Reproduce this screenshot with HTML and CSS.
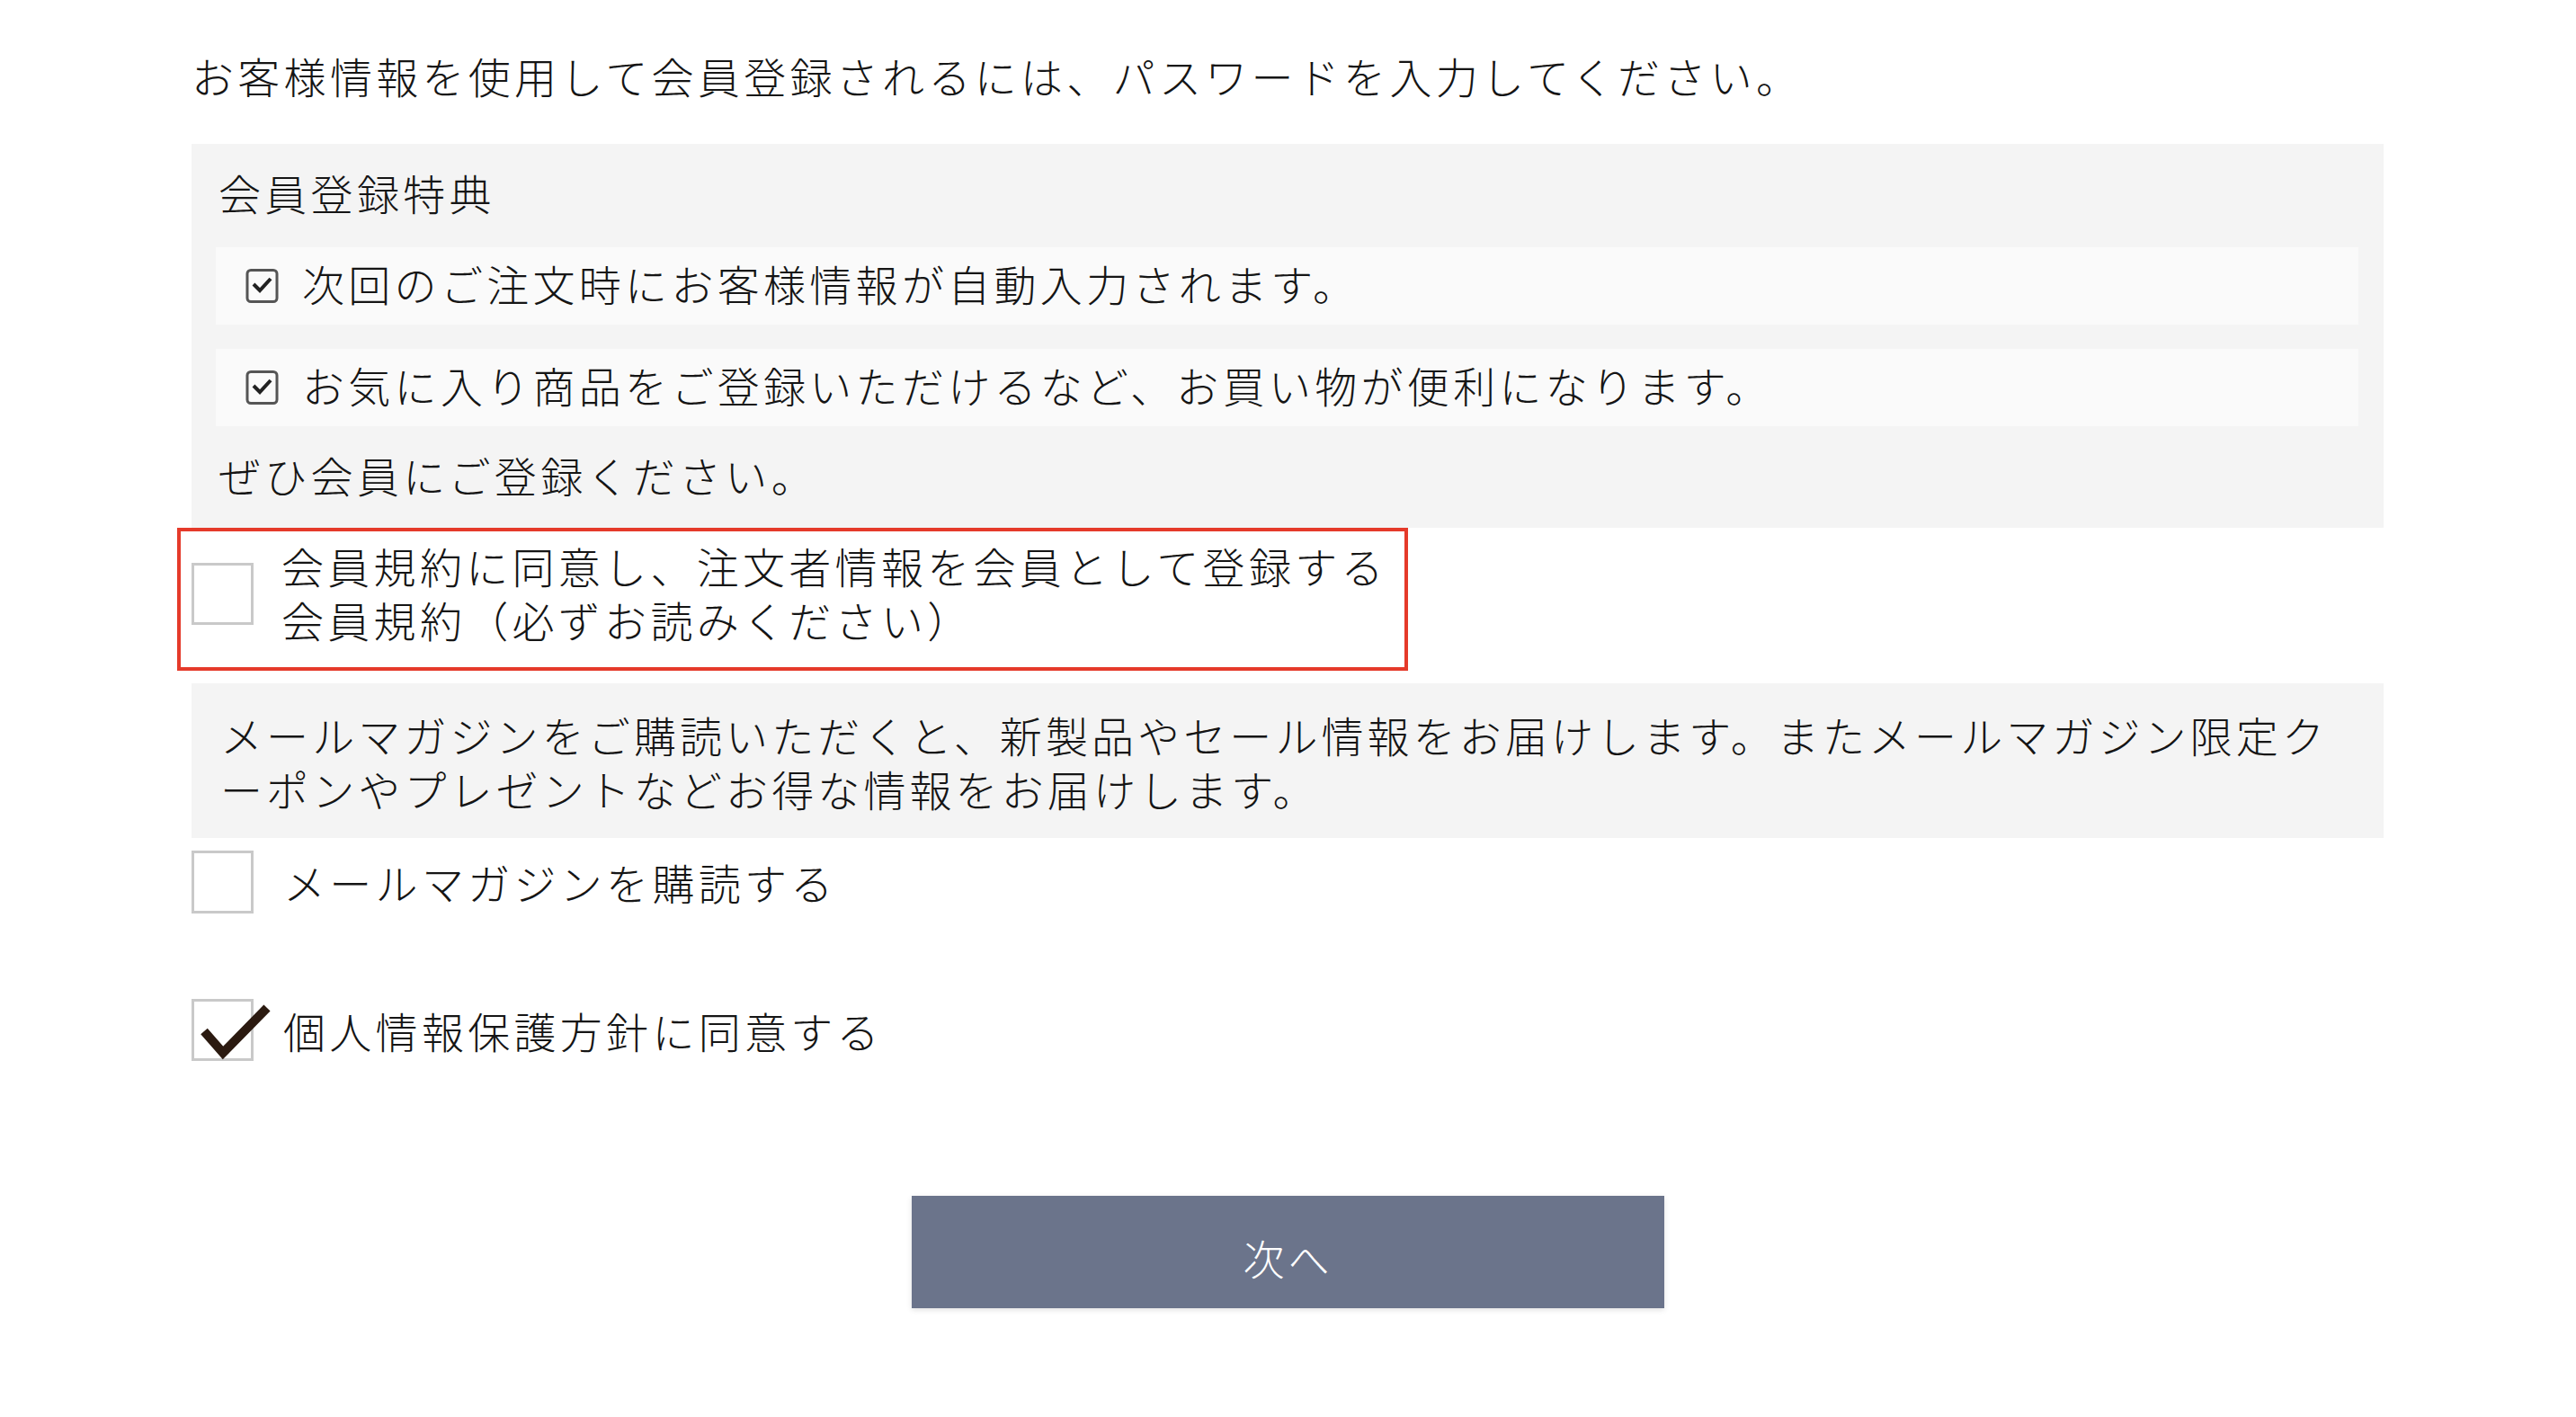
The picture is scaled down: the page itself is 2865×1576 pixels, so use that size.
FILE: index.html
```html
<!DOCTYPE html>
<html lang="ja">
<head>
<meta charset="utf-8">
<title>会員登録</title>
<link rel="stylesheet" href="styles.css">
</head>
<body>
<div class="page">
  <p class="intro">お客様情報を使用して会員登録されるには、パスワードを入力してください。</p>

  <section class="benefits">
    <h2 class="benefits-title">会員登録特典</h2>
    <div class="benefit-row">
      <svg class="benefit-icon" width="38" height="40" viewBox="0 0 38 40">
        <rect x="2" y="2.5" width="33" height="35" rx="4" fill="none" stroke="#555" stroke-width="3"/>
        <path d="M9 18 L16 25 L28 12" fill="none" stroke="#222" stroke-width="4" stroke-linejoin="miter"/>
      </svg>
      <span>次回のご注文時にお客様情報が自動入力されます。</span>
    </div>
    <div class="benefit-row">
      <svg class="benefit-icon" width="38" height="40" viewBox="0 0 38 40">
        <rect x="2" y="2.5" width="33" height="35" rx="4" fill="none" stroke="#555" stroke-width="3"/>
        <path d="M9 18 L16 25 L28 12" fill="none" stroke="#222" stroke-width="4" stroke-linejoin="miter"/>
      </svg>
      <span>お気に入り商品をご登録いただけるなど、お買い物が便利になります。</span>
    </div>
    <p class="benefits-note">ぜひ会員にご登録ください。</p>
  </section>

  <label class="agree-box">
    <span class="checkbox"></span>
    <span class="agree-text">会員規約に同意し、注文者情報を会員として登録する<br>会員規約（必ずお読みください）</span>
  </label>

  <section class="mail-info">
    <p>メールマガジンをご購読いただくと、新製品やセール情報をお届けします。またメールマガジン限定ク<br>ーポンやプレゼントなどお得な情報をお届けします。</p>
  </section>

  <label class="check-row mail-row">
    <span class="checkbox"></span>
    <span>メールマガジンを購読する</span>
  </label>

  <label class="check-row privacy-row">
    <span class="checkbox checked">
      <svg class="checkmark" width="96" height="70" viewBox="0 0 96 70">
        <path d="M14 36 L35 60 L84 10" fill="none" stroke="#2b1a10" stroke-width="10" stroke-linejoin="miter"/>
      </svg>
    </span>
    <span>個人情報保護方針に同意する</span>
  </label>

  <div class="actions">
    <button class="next-btn" type="button">次へ</button>
  </div>
</div>
</body>
</html>
```

FILE: styles.css
```css
html, body {
  margin: 0;
  padding: 0;
  background: #ffffff;
}

body {
  font-family: "Noto Sans CJK JP", "Noto Sans", sans-serif;
  font-weight: 300;
  color: #151515;
  font-size: 47px;
  line-height: 60px;
  letter-spacing: 4.3px;
}

.page {
  padding: 54px 214px 122px 213px;
}

.intro {
  margin: 0;
}

.benefits {
  margin-top: 46px;
  background: #f4f4f4;
  padding: 24px 28px 29px 27px;
  display: flex;
  flex-direction: column;
  gap: 27px;
}

.benefits-title {
  margin: 0 0 4px;
  padding-left: 3px;
  font-size: inherit;
  font-weight: inherit;
}

.benefit-row {
  height: 86px;
  box-sizing: border-box;
  padding-bottom: 6px;
  background: #fafafa;
  display: flex;
  align-items: center;
  gap: 25px;
  padding-left: 33px;
}

.benefit-icon {
  flex: none;
  margin-top: 6px;
}

.benefits-note {
  margin: -3px 0 0;
  padding-left: 3px;
}

.agree-box {
  margin-left: -16px;
  width: 1369px;
  box-sizing: border-box;
  border: 4px solid #e53a2a;
  padding: 8px 0 23px 12px;
  display: flex;
  align-items: center;
  gap: 31px;
}

.checkbox {
  flex: none;
  width: 69px;
  height: 69px;
  box-sizing: border-box;
  border: 3px solid #c9c9c9;
  background: #ffffff;
  position: relative;
}

.agree-box .checkbox {
  margin-top: 2px;
}

.checkmark {
  position: absolute;
  left: -3px;
  top: -3px;
}

.mail-info {
  margin-top: 14px;
  background: #f4f4f4;
  padding: 27px 28px 25px 32px;
}

.mail-info p {
  margin: 0;
  white-space: nowrap;
  letter-spacing: 4.1px;
}

.check-row {
  display: flex;
  align-items: center;
  gap: 33px;
}

.mail-row {
  margin-top: 14px;
}

.mail-row .checkbox {
  height: 70px;
}

.privacy-row {
  margin-top: 95px;
}

.actions {
  margin-top: 150px;
  display: flex;
  justify-content: center;
  padding-left: 1px;
}

.next-btn {
  width: 837px;
  height: 125px;
  border: none;
  background: #6b748b;
  color: #ffffff;
  font-family: inherit;
  font-weight: 300;
  font-size: 46px;
  letter-spacing: 4px;
  padding-top: 12px;
  box-shadow: 0 2px 6px rgba(0, 0, 0, 0.12);
  cursor: pointer;
}
```
